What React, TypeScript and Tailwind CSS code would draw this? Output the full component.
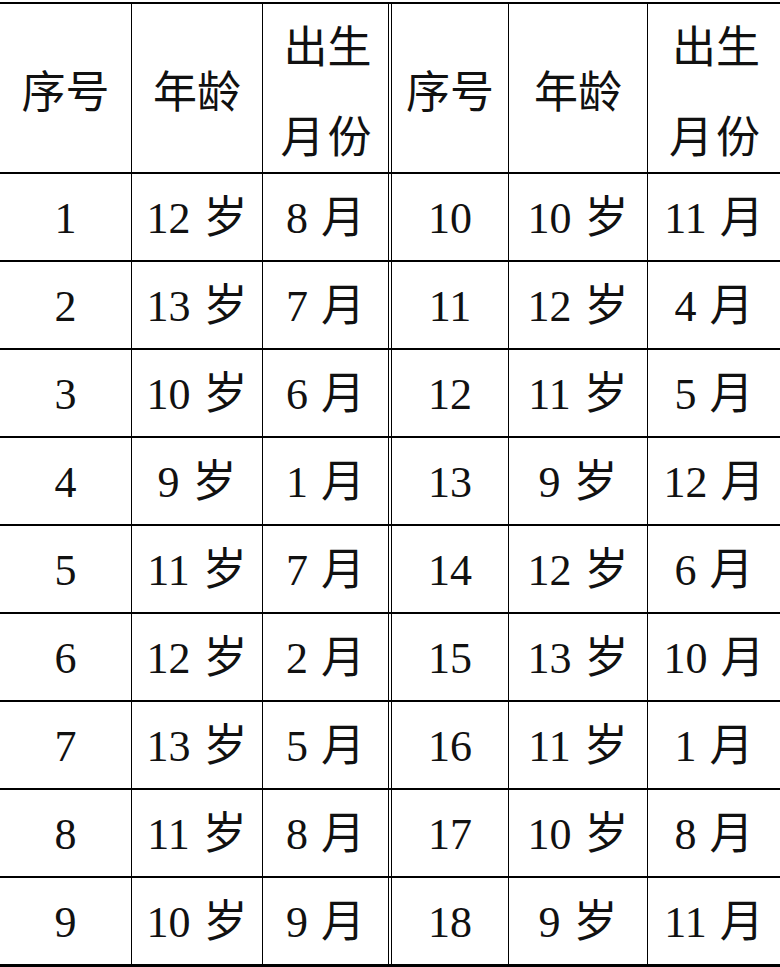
import React from 'react';

const rows: [string, string, string, string, string, string][] = [
  ['1', '12 岁', '8 月', '10', '10 岁', '11 月'],
  ['2', '13 岁', '7 月', '11', '12 岁', '4 月'],
  ['3', '10 岁', '6 月', '12', '11 岁', '5 月'],
  ['4', '9 岁', '1 月', '13', '9 岁', '12 月'],
  ['5', '11 岁', '7 月', '14', '12 岁', '6 月'],
  ['6', '12 岁', '2 月', '15', '13 岁', '10 月'],
  ['7', '13 岁', '5 月', '16', '11 岁', '1 月'],
  ['8', '11 岁', '8 月', '17', '10 岁', '8 月'],
  ['9', '10 岁', '9 月', '18', '9 岁', '11 月'],
];

const cols = 'grid grid-cols-[131px_131px_126px_4px_116px_139px_133px]';
const cell = 'flex items-center justify-center pt-1';
const head = 'flex items-center justify-center pb-[6px]';
const line = 'border-l-[1.5px] border-black';
const sep = 'border-l-[1.5px] border-r-[1.5px] border-black';

// number + unit, with the wider gap the print shows between them
const Val: React.FC<{ text: string }> = ({ text }) => {
  const [num, unit] = text.split(' ');
  return (
    <span className="flex items-center">
      <span>{num}</span>
      <span className="ml-[13px]">{unit}</span>
    </span>
  );
};

const HeaderGroup: React.FC = () => (
  <>
    <div className={head}>序号</div>
    <div className={`${head} ${line}`}>年龄</div>
    <div className={`${head} ${line} flex-col leading-[90px] pl-1`}>
      <span>出生</span>
      <span className="tracking-[3px]">月份</span>
    </div>
  </>
);

const App: React.FC = () => {
  return (
    <div
      className="w-[780px] h-[967px] bg-white text-[#111] pt-[2px]"
      style={{ fontFamily: '"Liberation Serif", "Noto Sans CJK SC", serif' }}
    >
      <div className="border-t-2 border-b-[3px] border-black text-[44px]">
        <div className={`${cols} h-[168px]`}>
          <HeaderGroup />
          <div className={sep} />
          <HeaderGroup />
        </div>
        {rows.map((r) => (
          <div key={r[0]} className={`${cols} h-[88px] border-t-2 border-black`}>
            <div className={cell}>{r[0]}</div>
            <div className={`${cell} ${line}`}><Val text={r[1]} /></div>
            <div className={`${cell} ${line}`}><Val text={r[2]} /></div>
            <div className={sep} />
            <div className={cell}>{r[3]}</div>
            <div className={`${cell} ${line}`}><Val text={r[4]} /></div>
            <div className={`${cell} ${line}`}><Val text={r[5]} /></div>
          </div>
        ))}
      </div>
    </div>
  );
};

export default App;
